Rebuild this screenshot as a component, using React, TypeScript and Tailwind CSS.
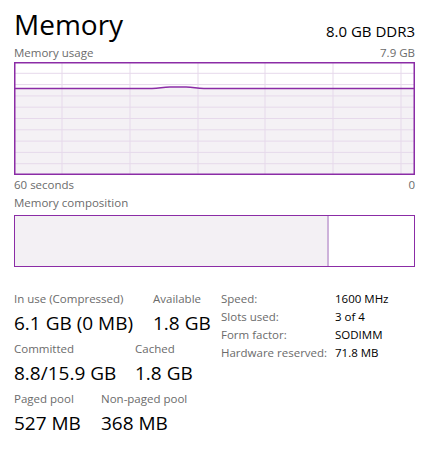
import React from 'react';

const PURPLE = '#8b2ca6';
const GRID = '#e6d9eb';

function UsageGraph() {
    const w = 401;
    const h = 113;
    const rows = Array.from({ length: 9 }, (_, i) => ((i + 1) * h) / 10);
    const cols = [48, 116, 184, 251, 319, 387];
    return (
        <svg width={w} height={h} viewBox={`0 0 ${w} ${h}`} className="block">
            <rect x={0} y={26} width={w} height={h - 26} fill="#f4f1f5" />
            {rows.map((y) => (
                <line key={y} x1={0} x2={w} y1={y} y2={y} stroke={GRID} strokeWidth={1} />
            ))}
            {cols.map((x) => (
                <line key={x} x1={x} x2={x} y1={0} y2={h} stroke={GRID} strokeWidth={1} />
            ))}
            <path
                d="M0 26.5 L138 26.5 C146 26.5 148 25 156 25 L172 25 C180 25 182 26.5 190 26.5 L401 26.5"
                fill="none"
                stroke={PURPLE}
                strokeWidth={1.3}
            />
            <rect x={0.75} y={0.75} width={w - 1.5} height={h - 1.5} fill="none" stroke={PURPLE} strokeWidth={1.5} />
        </svg>
    );
}

interface Stat {
    label: string;
    value: string;
}

function StatBlock({ stat, className }: { stat: Stat; className?: string }) {
    return (
        <div className={className}>
            <div className="text-[11.5px] leading-[14px] text-[#6b6b6b]">{stat.label}</div>
            <div className="text-[19px] leading-[24px] text-black mt-[5px]">{stat.value}</div>
        </div>
    );
}

export default function App() {
    const details: Stat[] = [
        { label: 'Speed:', value: '1600 MHz' },
        { label: 'Slots used:', value: '3 of 4' },
        { label: 'Form factor:', value: 'SODIMM' },
        { label: 'Hardware reserved:', value: '71.8 MB' },
    ];

    return (
        <div className="w-[428px] h-[464px] bg-white px-[14px] pt-[6px] text-black" style={{ fontFamily: '"Open Sans", "Noto Sans", sans-serif' }}>
            <div className="flex items-end justify-between w-[401px]">
                <h1 className="text-[28px] leading-[36px] font-normal">Memory</h1>
                <span className="text-[15px] leading-[20px] mb-[1px]">8.0 GB DDR3</span>
            </div>
            <div className="flex justify-between w-[401px] text-[11.5px] leading-[14px] text-[#6b6b6b] mt-[4px] mb-[2px]">
                <span>Memory usage</span>
                <span>7.9 GB</span>
            </div>
            <UsageGraph />
            <div className="flex justify-between w-[401px] text-[11.5px] leading-[14px] text-[#6b6b6b] mt-[3px]">
                <span>60 seconds</span>
                <span>0</span>
            </div>
            <div className="text-[11.5px] leading-[14px] text-[#6b6b6b] mt-[4px]">Memory composition</div>
            <div className="flex w-[401px] h-[52px] border-[1.5px] border-[#8b2ca6] mt-[5px]">
                <div className="w-[312px] bg-[#f3f0f4]" />
                <div className="w-[2px] bg-[#cdb2da]" />
                <div className="flex-1 bg-white" />
            </div>
            <div className="flex mt-[25px]">
                <div className="w-[207px] flex flex-col gap-[7px]">
                    <div className="flex">
                        <StatBlock stat={{ label: 'In use (Compressed)', value: '6.1 GB (0 MB)' }} className="w-[139px]" />
                        <StatBlock stat={{ label: 'Available', value: '1.8 GB' }} />
                    </div>
                    <div className="flex">
                        <StatBlock stat={{ label: 'Committed', value: '8.8/15.9 GB' }} className="w-[121px]" />
                        <StatBlock stat={{ label: 'Cached', value: '1.8 GB' }} />
                    </div>
                    <div className="flex">
                        <StatBlock stat={{ label: 'Paged pool', value: '527 MB' }} className="w-[87px]" />
                        <StatBlock stat={{ label: 'Non-paged pool', value: '368 MB' }} />
                    </div>
                </div>
                <div className="flex flex-col text-[11.5px] leading-[18px] -mt-[2px]">
                    {details.map((d) => (
                        <div key={d.label} className="flex">
                            <span className="w-[114px] text-[#6b6b6b]">{d.label}</span>
                            <span className="text-black">{d.value}</span>
                        </div>
                    ))}
                </div>
            </div>
        </div>
    );
}
